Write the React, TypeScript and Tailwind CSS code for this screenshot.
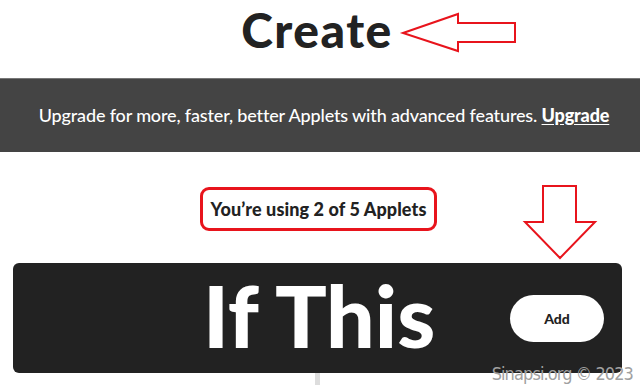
import React from "react";

export default function App() {
  return (
    <div className="relative w-[640px] h-[385px] overflow-hidden bg-white" style={{ fontFamily: "Lato, 'Open Sans', sans-serif" }}>
      <div className="flex flex-col">
        <div className="h-[78px] w-full flex justify-center pt-[2px] pr-[6px]">
          <h1 className="text-[48px] leading-[56px] font-black text-[#222] tracking-[1.5px]">Create</h1>
        </div>
        <div className="w-full h-[74px] bg-[#444] border-t border-[#777] flex items-center justify-center">
          <p className="text-white text-[18px] font-medium tracking-[-0.15px] pl-[8px]">
            Upgrade for more, faster, better Applets with advanced features.{" "}
            <span className="font-black underline underline-offset-2">Upgrade</span>
          </p>
        </div>
        <div className="h-[111px] w-full flex justify-center pt-[35px]">
          <div className="h-[44px] px-[8px] mr-[3px] border-[3px] border-[#e8141c] rounded-[9px] flex items-center">
            <span className="text-[#222] text-[18px] font-black tracking-[0.1px]">You’re using 2 of 5 Applets</span>
          </div>
        </div>
        <div className="ml-[13px] w-[609px] h-[110px] bg-[#222] rounded-[6px] flex items-center relative">
          <span className="absolute left-[190px] top-[4px] text-white text-[86px] leading-[96px] font-black tracking-[0px]">If This</span>
          <div className="ml-auto mr-[18px] w-[94px] h-[47px] bg-white rounded-full flex items-center justify-center">
            <span className="text-[#222] text-[14px] font-black">Add</span>
          </div>
        </div>
        <div className="w-[5px] h-[12px] bg-[#ddd] ml-[315px]" />
      </div>

      <svg className="absolute left-0 top-0" width="640" height="385" viewBox="0 0 640 385" fill="none">
        <polygon points="403,33 458,14 458,23 515,23 515,42 458,42 458,51" stroke="#e8141c" strokeWidth="2" fill="white" />
        <polygon points="543,186 576,186 576,222 595,222 560,258 525,222 543,222" stroke="#e8141c" strokeWidth="2" fill="white" />
      </svg>

      <span className="absolute right-[7px] top-[360px] text-[18px] text-[#a0a0a0] tracking-[-0.9px]" style={{ fontFamily: "'DejaVu Sans Condensed', 'Liberation Sans', sans-serif", fontStretch: "condensed" }}>
        Sinapsi.org © 2023
      </span>
    </div>
  );
}
